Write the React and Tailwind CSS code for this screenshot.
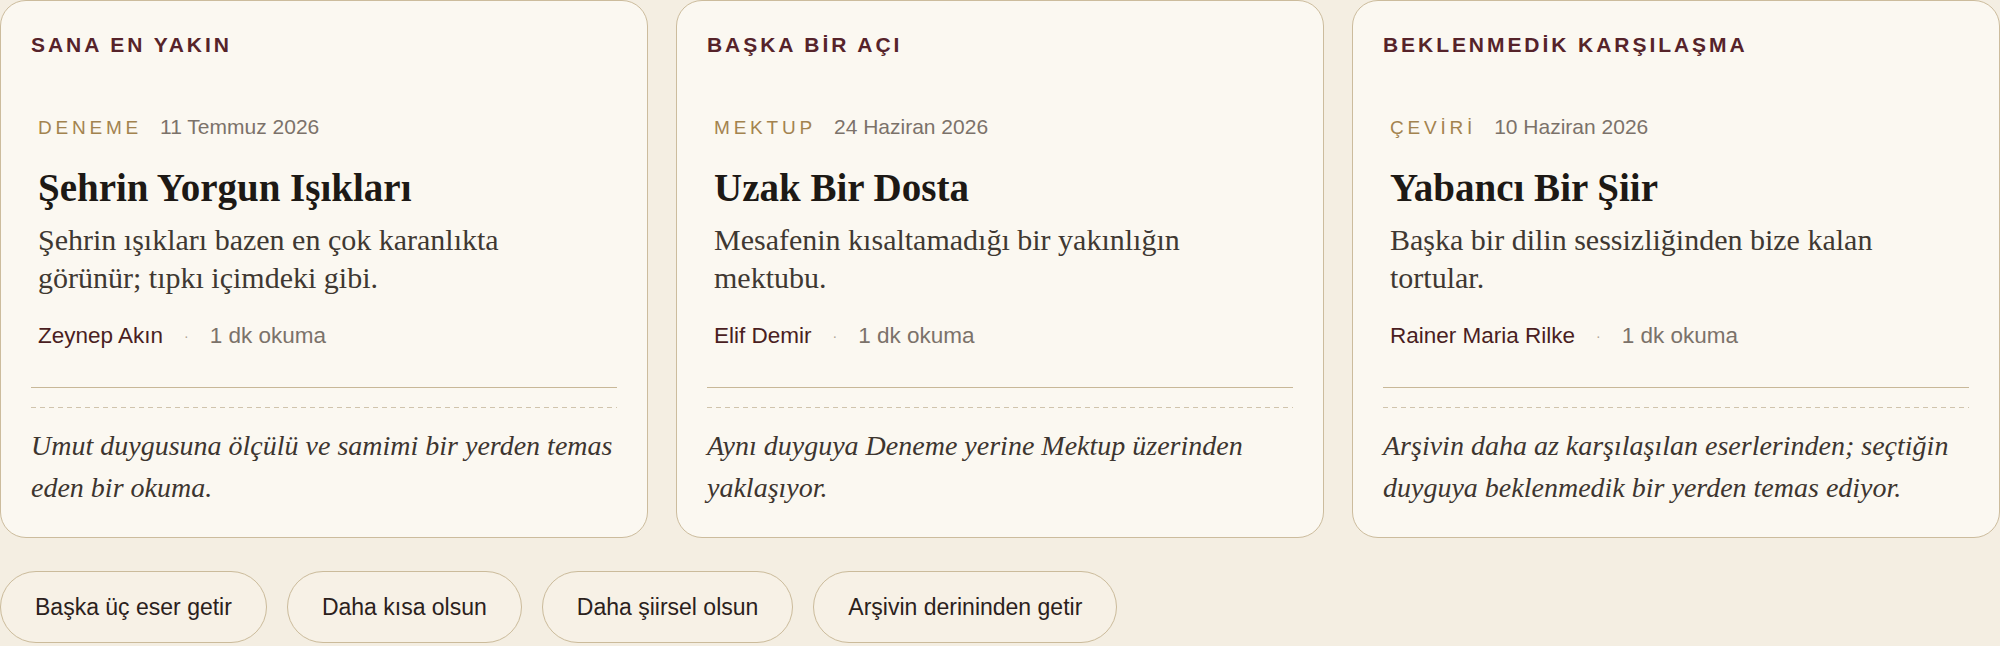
import React from 'react';

const sans = 'font-["Liberation_Sans",Arial,sans-serif]';
const serif = 'font-["Liberation_Serif","Times_New_Roman",serif]';

const picks = [
  {
    label: 'SANA EN YAKIN',
    category: 'DENEME',
    date: '11 Temmuz 2026',
    title: 'Şehrin Yorgun Işıkları',
    excerpt: 'Şehrin ışıkları bazen en çok karanlıkta görünür; tıpkı içimdeki gibi.',
    author: 'Zeynep Akın',
    readTime: '1 dk okuma',
    note: 'Umut duygusuna ölçülü ve samimi bir yerden temas eden bir okuma.',
  },
  {
    label: 'BAŞKA BİR AÇI',
    category: 'MEKTUP',
    date: '24 Haziran 2026',
    title: 'Uzak Bir Dosta',
    excerpt: 'Mesafenin kısaltamadığı bir yakınlığın mektubu.',
    author: 'Elif Demir',
    readTime: '1 dk okuma',
    note: 'Aynı duyguya Deneme yerine Mektup üzerinden yaklaşıyor.',
  },
  {
    label: 'BEKLENMEDİK KARŞILAŞMA',
    category: 'ÇEVİRİ',
    date: '10 Haziran 2026',
    title: 'Yabancı Bir Şiir',
    excerpt: 'Başka bir dilin sessizliğinden bize kalan tortular.',
    author: 'Rainer Maria Rilke',
    readTime: '1 dk okuma',
    note: 'Arşivin daha az karşılaşılan eserlerinden; seçtiğin duyguya beklenmedik bir yerden temas ediyor.',
  },
];

const actions = ['Başka üç eser getir', 'Daha kısa olsun', 'Daha şiirsel olsun', 'Arşivin derininden getir'];

function PickCard({ pick }) {
  return (
    <div className="rounded-[26px] border border-[#ccbc9d] bg-[#fbf8f1] px-[30px] pt-[32px] pb-[28px]">
      <h3 className={`${sans} text-[21px] leading-[24px] font-bold tracking-[0.14em] text-[#56232a]`}>
        {pick.label}
      </h3>

      <article className="mt-[58px] px-[7px]">
        <div className="flex items-baseline gap-[18px]">
          <span className={`${sans} text-[19px] leading-[24px] tracking-[0.2em] text-[#a3834f]`}>
            {pick.category}
          </span>
          <span className={`${sans} text-[21px] leading-[24px] text-[#7b726a]`}>{pick.date}</span>
        </div>
        <h2 className={`${serif} mt-[24px] text-[39px] leading-[47px] font-bold text-[#1d1915]`}>
          {pick.title}
        </h2>
        <p className={`${serif} mt-[10px] pr-4 text-[30px] leading-[38px] text-[#3f3832]`}>
          {pick.excerpt}
        </p>
        <div className={`${sans} mt-[26px] flex items-center gap-[21px] text-[22.5px] leading-[26px]`}>
          <span className="text-[#4a1e22]">{pick.author}</span>
          <span className="text-[14px] text-[#b0a595]">·</span>
          <span className="text-[#7b726a]">{pick.readTime}</span>
        </div>
      </article>

      <div className="mt-[38px] h-px bg-[#c8b898]" />
      <div className="mt-[19px] h-px bg-[repeating-linear-gradient(90deg,#d0c4ad_0_5px,transparent_5px_9px)]" />

      <p className={`${serif} mt-[17px] text-[28px] leading-[42px] italic text-[#3d352f]`}>
        {pick.note}
      </p>
    </div>
  );
}

export default function App() {
  return (
    <div className="min-h-screen bg-[#f4eee2]">
      <div className="grid grid-cols-3 gap-[28px]">
        {picks.map((pick) => (
          <PickCard key={pick.label} pick={pick} />
        ))}
      </div>

      <div className="mt-[33px] flex gap-[20px]">
        {actions.map((a) => (
          <button
            key={a}
            className={`${sans} rounded-full border border-[#cbbb9b] bg-[#f7f1e6] px-[34px] py-[21px] text-[23px] leading-[28px] text-[#2b211c]`}
          >
            {a}
          </button>
        ))}
      </div>
    </div>
  );
}
